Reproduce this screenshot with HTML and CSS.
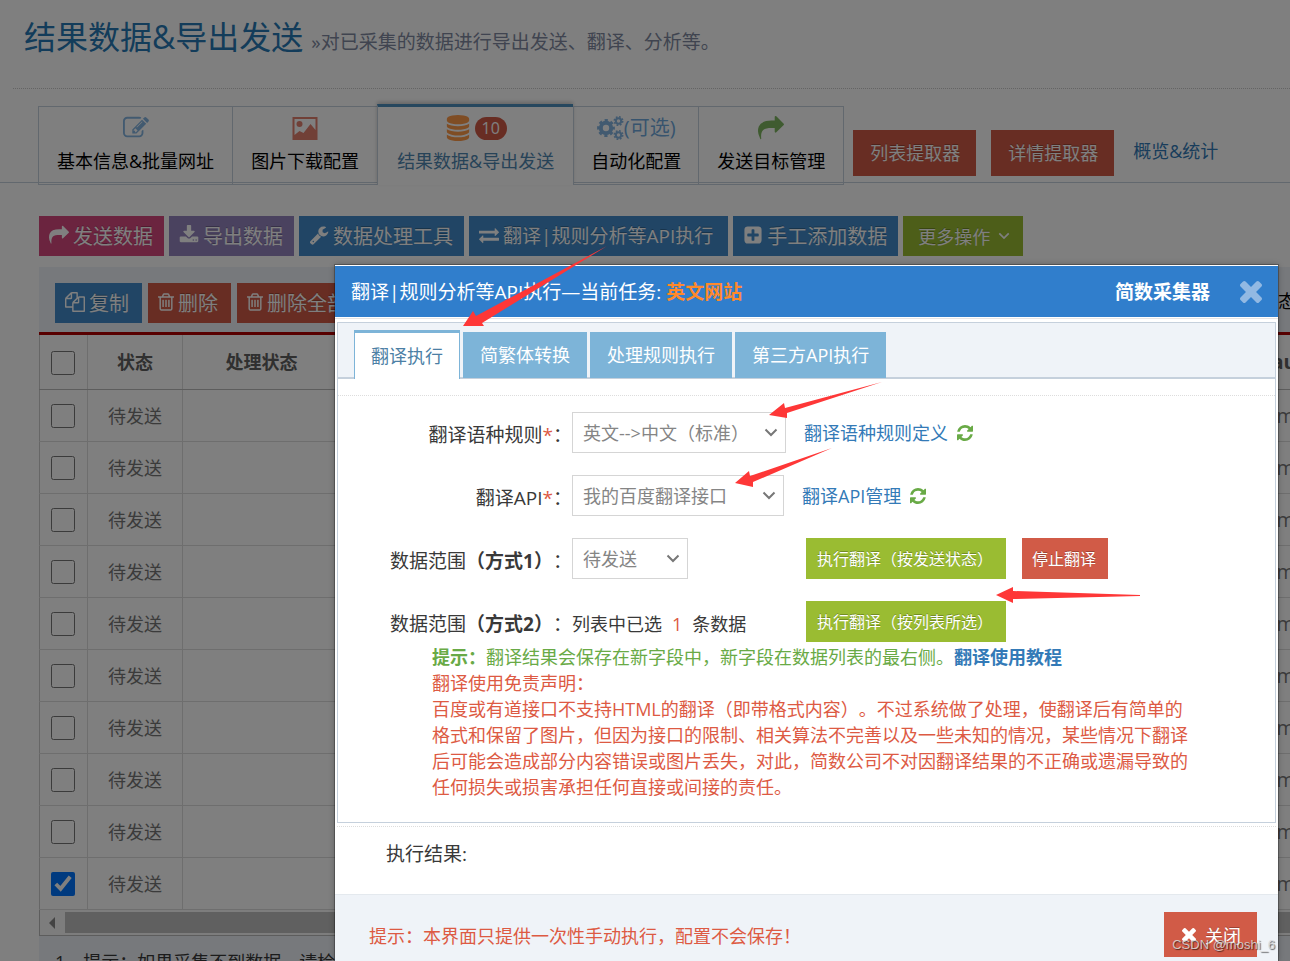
FILE: index.html
```
<!DOCTYPE html>
<html lang="zh-CN">
<head>
<meta charset="utf-8">
<title>结果数据&amp;导出发送</title>
<link rel="stylesheet" href="styles.css">
</head>
<body>
<svg class="defs" aria-hidden="true">
  <symbol id="edit" viewBox="0 0 1792 1792"><path d="M888 1184l116-116-152-152-116 116v56h96v96h56zm440-720q-16-16-33 1l-350 350q-17 17-1 33t33-1l350-350q17-17 1-33zm80 594v190q0 119-84.500 203.500t-203.500 84.500h-832q-119 0-203.500-84.500t-84.500-203.500v-832q0-119 84.500-203.500t203.500-84.500h832q63 0 117 25 15 7 18 23 3 17-9 29l-49 49q-14 14-32 8-23-6-45-6h-832q-66 0-113 47t-47 113v832q0 66 47 113t113 47h832q66 0 113-47t47-113v-126q0-13 9-22l64-64q15-15 35-7t20 29zm-96-738l288 288-672 672h-288v-288zm444 132l-92 92-288-288 92-92q28-28 68-28t68 28l152 152q28 28 28 68t-28 68z"/></symbol>
  <symbol id="picture" viewBox="0 0 25 23"><path fill-rule="evenodd" d="M0 0h25v23H0zM2 2v16l5-4 4 2 7-9 5 6V2z"/><circle cx="7" cy="7" r="3"/></symbol>
  <symbol id="database" viewBox="0 0 1792 1792"><path d="M896 768q237 0 443-43t325-127v170q0 69-103 128t-280 93.500-385 34.500-385-34.500-280-93.500-103-128v-170q119 84 325 127t443 43zm0 768q237 0 443-43t325-127v170q0 69-103 128t-280 93.500-385 34.500-385-34.500-280-93.500-103-128v-170q119 84 325 127t443 43zm0-384q237 0 443-43t325-127v170q0 69-103 128t-280 93.500-385 34.500-385-34.500-280-93.500-103-128v-170q119 84 325 127t443 43zm0-1152q208 0 385 34.500t280 93.500 103 128v128q0 69-103 128t-280 93.500-385 34.500-385-34.500-280-93.500-103-128v-128q0-69 103-128t280-93.500 385-34.500z"/></symbol>
  <symbol id="cogs" viewBox="0 0 27 24"><g fill="none" stroke="currentColor"><circle cx="9" cy="12" r="5.200" stroke-width="4"/><circle cx="9" cy="12" r="7.600" stroke-width="2.600" stroke-dasharray="3.200 2.769" stroke-dashoffset="1.600"/><circle cx="21.500" cy="5" r="2.700" stroke-width="2"/><circle cx="21.500" cy="5" r="4.200" stroke-width="1.600" stroke-dasharray="1.800 1.499"/><circle cx="21.500" cy="19" r="2.700" stroke-width="2"/><circle cx="21.500" cy="19" r="4.200" stroke-width="1.600" stroke-dasharray="1.800 1.499"/></g></symbol>
  <symbol id="share" viewBox="0 0 1792 1792"><path d="M1792 640q0 26-19 45l-512 512q-19 19-45 19t-45-19-19-45v-256h-224q-98 0-175.500 6t-154 21.500-133 42.500-105.500 69.500-80 101-48.500 138.500-17.500 181q0 55 5 123 0 6 2.500 23.500t2.500 26.500q0 15-8.500 25t-23.500 10q-16 0-28-17-7-9-13-22t-13.500-30-10.500-24q-127-285-127-451 0-199 53-333 162-403 875-403h224v-256q0-26 19-45t45-19 45 19l512 512q19 19 19 45z"/></symbol>
  <symbol id="download" viewBox="0 0 1792 1792"><path d="M1344 1344q0-26-19-45t-45-19-45 19-19 45 19 45 45 19 45-19 19-45zm256 0q0-26-19-45t-45-19-45 19-19 45 19 45 45 19 45-19 19-45zm128-224v320q0 40-28 68t-68 28h-1472q-40 0-68-28t-28-68v-320q0-40 28-68t68-28h465l135 136q58 56 136 56t136-56l136-136h464q40 0 68 28t28 68zm-325-569q17 41-14 70l-448 448q-18 19-45 19t-45-19l-448-448q-31-29-14-70 17-39 59-39h256v-448q0-26 19-45t45-19h256q26 0 45 19t19 45v448h256q42 0 59 39z"/></symbol>
  <symbol id="wrench" viewBox="0 0 1792 1792"><path d="M448 1472q0-26-19-45t-45-19-45 19-19 45 19 45 45 19 45-19 19-45zm644-420l-682 682q-37 37-90 37-52 0-91-37l-106-108q-38-36-38-90 0-53 38-91l681-681q39 98 114.500 173.500t173.500 114.500zm634-435q0 39-23 106-47 134-164.500 217.500t-258.500 83.500q-185 0-316.500-131.500t-131.500-316.500 131.500-316.500 316.500-131.500q58 0 121.500 16.500t107.500 46.500q16 11 16 28t-16 28l-293 169v224l193 107q5-3 79-48.500t135.500-81 70.500-35.500q15 0 23.500 10t8.500 25z"/></symbol>
  <symbol id="exchange" viewBox="0 0 1792 1792"><path d="M1792 1184v192q0 13-9.500 22.500t-22.500 9.500h-1376v192q0 13-9.500 22.500t-22.500 9.500q-12 0-24-10l-319-320q-9-9-9-22 0-14 9-23l320-320q9-9 23-9 13 0 22.500 9.500t9.500 22.500v192h1376q13 0 22.500 9.500t9.500 22.500zm0-544q0 14-9 23l-320 320q-9 9-23 9-13 0-22.500-9.500t-9.500-22.500v-192h-1376q-13 0-22.500-9.500t-9.500-22.500v-192q0-13 9.500-22.500t22.500-9.500h1376v-192q0-14 9-23t23-9q12 0 24 10l319 319q9 9 9 23z"/></symbol>
  <symbol id="plus" viewBox="0 0 1792 1792"><path d="M1408 960v-128q0-26-19-45t-45-19h-320v-320q0-26-19-45t-45-19h-128q-26 0-45 19t-19 45v320h-320q-26 0-45 19t-19 45v128q0 26 19 45t45 19h320v320q0 26 19 45t45 19h128q26 0 45-19t19-45v-320h320q26 0 45-19t19-45zm256-544v960q0 119-84.500 203.500t-203.500 84.500h-960q-119 0-203.500-84.500t-84.500-203.500v-960q0-119 84.500-203.500t203.500-84.500h960q119 0 203.500 84.500t84.500 203.500z"/></symbol>
  <symbol id="copy" viewBox="0 0 1792 1792"><path d="M1696 384q40 0 68 28t28 68v1216q0 40-28 68t-68 28h-960q-40 0-68-28t-28-68v-288h-544q-40 0-68-28t-28-68v-672q0-40 20-88t48-76l408-408q28-28 76-48t88-20h416q40 0 68 28t28 68v328q68-40 128-40h416zm-544 213l-299 299h299v-299zm-640-384l-299 299h299v-299zm196 647l316-316v-416h-384v416q0 40-28 68t-68 28h-416v640h512v-256q0-40 20-88t48-76zm956 804v-1152h-384v416q0 40-28 68t-68 28h-416v640h896z"/></symbol>
  <symbol id="trash" viewBox="192 128 1408 1536"><path d="M704 736v576q0 14-9 23t-23 9h-64q-14 0-23-9t-9-23v-576q0-14 9-23t23-9h64q14 0 23 9t9 23zm256 0v576q0 14-9 23t-23 9h-64q-14 0-23-9t-9-23v-576q0-14 9-23t23-9h64q14 0 23 9t9 23zm256 0v576q0 14-9 23t-23 9h-64q-14 0-23-9t-9-23v-576q0-14 9-23t23-9h64q14 0 23 9t9 23zm128 724v-948h-896v948q0 22 7 40.500t14.500 27 10.500 8.500h832q3 0 10.500-8.500t14.500-27 7-40.500zm-672-1076h448l-48-117q-7-9-17-11h-317q-10 2-17 11zm928 32v64q0 14-9 23t-23 9h-96v948q0 83-47 143.500t-113 60.500h-832q-66 0-113-58.500t-47-141.500v-952h-96q-14 0-23-9t-9-23v-64q0-14 9-23t23-9h309l70-167q15-37 54-63t79-26h320q40 0 79 26t54 63l70 167h309q14 0 23 9t9 23z"/></symbol>
  <symbol id="refresh" viewBox="128 128 1536 1536"><path d="M1639 1056q0 5-1 7-64 268-268 434.500t-478 166.500q-146 0-282.500-55t-243.500-157l-129 129q-19 19-45 19t-45-19-19-45v-448q0-26 19-45t45-19h448q26 0 45 19t19 45-19 45l-137 137q71 66 161 102t187 36q134 0 250-65t186-179q11-17 53-117 8-23 30-23h192q13 0 22.500 9.500t9.500 22.500zm25-800v448q0 26-19 45t-45 19h-448q-26 0-45-19t-19-45 19-45l138-138q-148-137-349-137-134 0-250 65t-186 179q-11 17-53 117-8 23-30 23h-199q-13 0-22.500-9.500t-9.500-22.500v-7q65-268 270-434.500t480-166.500q146 0 284 55.500t245 156.500l130-129q19-19 45-19t45 19 19 45z"/></symbol>
  <symbol id="times" viewBox="302 366 1188 1188"><path d="M1490 1322q0 40-28 68l-136 136q-28 28-68 28t-68-28l-294-294-294 294q-28 28-68 28t-68-28l-136-136q-28-28-28-68t28-68l294-294-294-294q-28-28-28-68t28-68l136-136q28-28 68-28t68 28l294 294 294-294q28-28 68-28t68 28l136 136q28 28 28 68t-28 68l-294 294 294 294q28 28 28 68z"/></symbol>
  <symbol id="chevron" viewBox="0 0 14 9"><path d="M1.500 1.500l5.500 5.500 5.500-5.500" fill="none" stroke="currentColor" stroke-width="2"/></symbol>
</svg>

<div class="page">
  <header class="page-header">
    <h1>结果数据&amp;导出发送</h1>
    <small>»对已采集的数据进行导出发送、翻译、分析等。</small>
  </header>

  <nav class="main-tabs">
    <a class="main-tab" href="#"><span class="tab-icon blue"><svg class="i26"><use href="#edit"/></svg></span>基本信息&amp;批量网址</a>
    <a class="main-tab" href="#"><span class="tab-icon red"><svg class="pic"><use href="#picture"/></svg></span>图片下载配置</a>
    <a class="main-tab current" href="#"><span class="tab-icon orange"><svg class="i26"><use href="#database"/></svg><b class="badge">10</b></span>结果数据&amp;导出发送</a>
    <a class="main-tab" href="#"><span class="tab-icon blue"><svg class="cogs"><use href="#cogs"/></svg>(可选)</span>自动化配置</a>
    <a class="main-tab" href="#"><span class="tab-icon green"><svg class="i26"><use href="#share"/></svg></span>发送目标管理</a>
    <button class="extractor" type="button">列表提取器</button>
    <button class="extractor" type="button">详情提取器</button>
    <a class="stats" href="#">概览&amp;统计</a>
  </nav>

  <div class="toolbar">
    <button class="btn pink" type="button"><svg class="i20"><use href="#share"/></svg>发送数据</button>
    <button class="btn purple" type="button"><svg class="i20"><use href="#download"/></svg>导出数据</button>
    <button class="btn primary" type="button"><svg class="i20"><use href="#wrench"/></svg>数据处理工具</button>
    <button class="btn primary compact" type="button"><svg class="i20"><use href="#exchange"/></svg>翻译|规则分析等API执行</button>
    <button class="btn primary" type="button"><svg class="i20"><use href="#plus"/></svg>手工添加数据</button>
    <button class="btn lime" type="button">更多操作<svg class="caret"><use href="#chevron"/></svg></button>
  </div>

  <section class="data-panel">
    <div class="data-tools">
      <button class="btn primary" type="button"><svg class="i20"><use href="#copy"/></svg>复制</button>
      <button class="btn danger" type="button"><svg class="bin"><use href="#trash"/></svg>删除</button>
      <button class="btn danger" type="button"><svg class="bin"><use href="#trash"/></svg>删除全部</button>
      <span class="filter">态</span>
    </div>
    <table class="data-table">
      <colgroup><col class="c-check"><col class="c-state"><col class="c-process"><col><col class="c-last"></colgroup>
      <thead><tr><th><input type="checkbox" aria-label="全选"></th><th>状态</th><th>处理状态</th><th></th><th class="last">au</th></tr></thead>
      <tbody>
        <tr><td><input type="checkbox" aria-label="第1行"></td><td>待发送</td><td></td><td></td><td class="last">im</td></tr>
        <tr><td><input type="checkbox" aria-label="第2行"></td><td>待发送</td><td></td><td></td><td class="last">im</td></tr>
        <tr><td><input type="checkbox" aria-label="第3行"></td><td>待发送</td><td></td><td></td><td class="last">im</td></tr>
        <tr><td><input type="checkbox" aria-label="第4行"></td><td>待发送</td><td></td><td></td><td class="last">im</td></tr>
        <tr><td><input type="checkbox" aria-label="第5行"></td><td>待发送</td><td></td><td></td><td class="last">im</td></tr>
        <tr><td><input type="checkbox" aria-label="第6行"></td><td>待发送</td><td></td><td></td><td class="last">im</td></tr>
        <tr><td><input type="checkbox" aria-label="第7行"></td><td>待发送</td><td></td><td></td><td class="last">im</td></tr>
        <tr><td><input type="checkbox" aria-label="第8行"></td><td>待发送</td><td></td><td></td><td class="last">im</td></tr>
        <tr><td><input type="checkbox" aria-label="第9行"></td><td>待发送</td><td></td><td></td><td class="last">im</td></tr>
        <tr><td><input type="checkbox" aria-label="第10行" checked></td><td>待发送</td><td></td><td></td><td class="last">im</td></tr>
      </tbody>
    </table>
    <div class="scrollbar"><span class="scroll-left"></span><span class="thumb"></span></div>
    <p class="note">1、提示：如果采集不到数据，请检查</p>
  </section>
</div>

<div class="backdrop"></div>

<div class="modal" role="dialog" aria-labelledby="dialog-title">
  <div class="modal-header">
    <h2 id="dialog-title">翻译|规则分析等API执行—当前任务: <b>英文网站</b></h2>
    <strong>简数采集器</strong>
    <button class="close" type="button" aria-label="关闭窗口"><svg class="i20"><use href="#times"/></svg></button>
  </div>
  <div class="modal-body">
    <div class="panel">
      <div class="tabs" role="tablist">
        <button class="tab selected" type="button" role="tab">翻译执行</button>
        <button class="tab" type="button" role="tab">简繁体转换</button>
        <button class="tab" type="button" role="tab">处理规则执行</button>
        <button class="tab" type="button" role="tab">第三方API执行</button>
      </div>
      <form class="form">
        <div class="row">
          <label for="rule">翻译语种规则<i>*</i>：</label>
          <span class="select w-rule"><select id="rule"><option>英文--&gt;中文（标准）</option></select><svg><use href="#chevron"/></svg></span>
          <a href="#">翻译语种规则定义</a><svg class="reload"><use href="#refresh"/></svg>
        </div>
        <div class="row">
          <label for="api">翻译API<i>*</i>：</label>
          <span class="select w-api"><select id="api"><option>我的百度翻译接口</option></select><svg><use href="#chevron"/></svg></span>
          <a href="#">翻译API管理</a><svg class="reload"><use href="#refresh"/></svg>
        </div>
        <div class="row">
          <label for="range">数据范围<b>（方式1）</b>：</label>
          <div class="field"><span class="select w-range"><select id="range"><option>待发送</option></select><svg><use href="#chevron"/></svg></span></div>
          <button class="action lime" type="button">执行翻译（按发送状态）</button>
          <button class="action danger" type="button">停止翻译</button>
        </div>
        <div class="row">
          <span class="label">数据范围<b>（方式2）</b>：</span>
          <div class="field">列表中已选<em>1</em>条数据</div>
          <button class="action lime" type="button">执行翻译（按列表所选）</button>
        </div>
        <div class="tips">
          <p class="hint"><b>提示：</b>翻译结果会保存在新字段中，新字段在数据列表的最右侧。<a href="#">翻译使用教程</a></p>
          <p>翻译使用免责声明：</p>
          <p>百度或有道接口不支持HTML的翻译（即带格式内容）。不过系统做了处理，使翻译后有简单的<br>格式和保留了图片，但因为接口的限制、相关算法不完善以及一些未知的情况，某些情况下翻译<br>后可能会造成部分内容错误或图片丢失，对此，简数公司不对因翻译结果的不正确或遗漏导致的<br>任何损失或损害承担任何直接或间接的责任。</p>
        </div>
      </form>
    </div>
    <div class="result">执行结果:</div>
  </div>
  <div class="modal-footer">
    <span>提示：本界面只提供一次性手动执行，配置不会保存！</span>
    <button class="dismiss" type="button"><svg><use href="#times"/></svg>关闭</button>
  </div>
</div>

<svg class="arrows" viewBox="0 0 1290 961" aria-hidden="true">
  <path d="M463 326l10-15 3 5 131-70-125 77 2 3z"/>
  <path d="M769 415l15-12 1 5 97-26-95 31 0 5z"/>
  <path d="M735 483l14-12 1 5 82-28-79 34 0 5z"/>
  <path d="M996 595l17-8v4l127 4v1l-127 3v4z"/>
</svg>
<span class="watermark">CSDN @moshi_6</span>
</body>
</html>
```
FILE: styles.css
```
* { box-sizing: border-box; }
html, body { height: 100%; }
body {
  margin: 0;
  overflow: hidden;
  position: relative;
  background: #fff;
  color: #393939;
  font-family: "Open Sans", "Noto Sans CJK SC", sans-serif;
  font-size: 18px;
  line-height: 26px;
  text-spacing-trim: space-all;
}
h1, h2, p { margin: 0; font-weight: 400; }
a { color: #337ab7; text-decoration: none; }
button, select { font-family: inherit; border: 0; border-radius: 0; margin: 0; white-space: nowrap; }
svg { fill: currentColor; flex: none; }
.defs { position: absolute; width: 0; height: 0; }
.i20 { width: 20px; height: 20px; }
.i26 { width: 26px; height: 26px; }

.page { height: 100%; overflow: hidden; }
.page-header {
  display: flex;
  align-items: baseline;
  gap: 8px;
  height: 89px;
  margin-left: 13px;
  padding: 13px 0 0 11px;
  border-bottom: 1px dotted #c8c8c8;
  white-space: nowrap;
}
.page-header h1 { color: #2679b5; font-size: 32px; line-height: 48px; }
.page-header small { color: #8089a0; font-size: 19px; }

.main-tabs {
  display: flex;
  align-items: flex-end;
  height: 79px;
  margin-top: 15px;
  padding-left: 38px;
  border-bottom: 1px solid #c5d0dc;
  white-space: nowrap;
}
.main-tab {
  display: flex;
  flex-direction: column;
  align-items: center;
  height: 79px;
  margin-bottom: -3px;
  padding: 7px 18px 0;
  border: 1px solid #c5d0dc;
  border-right: 0;
  color: #000;
}
.main-tab:nth-child(4) { padding: 7px 17px 0; }
.main-tab:nth-child(5) { border-right: 1px solid #c5d0dc; }
.main-tab.current {
  height: 81px;
  padding: 7px 19px 0;
  border-top: 3px solid #4c8fbd;
  border-bottom: 0;
  background: #fff;
  color: #4f86b0;
  box-shadow: 0 -2px 4px rgba(0, 0, 0, .2);
}
.tab-icon { display: flex; align-items: center; height: 28px; margin-bottom: 6px; font-size: 20px; }
.tab-icon svg { opacity: .85; }
.current .tab-icon { gap: 4px; }
.pic { width: 26px; height: 23px; }
.cogs { width: 27px; height: 24px; }
.blue { color: #6fa8dc; }
.red { color: #dd6a57; }
.orange { color: #ff892a; }
.green { color: #69aa46; }
.badge {
  padding: 0 7px;
  border-radius: 12px;
  background: #d15b47;
  color: #fff;
  font-size: 16px;
  font-weight: 400;
  line-height: 23px;
}
.extractor {
  height: 46px;
  margin: 0 6px 6px 9px;
  padding: 0 16px 2px 17px;
  background: #d15b47;
  color: #fff;
  font-size: 18px;
  text-shadow: 0 -1px 0 rgba(0, 0, 0, .25);
}
.stats { margin: 0 0 18px 13px; }

.toolbar { display: flex; gap: 5px; margin-top: 33px; padding-left: 39px; }
.btn {
  display: flex;
  align-items: center;
  flex: none;
  gap: 4px;
  height: 40px;
  padding: 0 11px 2px 10px;
  color: #fff;
  font-size: 20px;
  text-shadow: 0 -1px 0 rgba(0, 0, 0, .25);
}
.btn.compact { padding-right: 15px; font-size: 19px; }
.toolbar .btn.lime { gap: 8px; padding: 0 13px 0 15px; font-size: 18px; }
.caret { width: 12px; height: 8px; }
.bin { width: 16px; height: 18px; }
.pink { background: #d6487e; }
.purple { background: #9585bf; }
.primary { background: #428bca; }
.danger { background: #d15b47; }
.lime { background: #9abc32; }

.data-panel { margin: 11px 0 0 39px; background: #eff3f8; }
.data-tools { display: flex; gap: 6px; height: 65px; padding: 16px 0 0 16px; overflow: hidden; }
.data-tools .btn { padding-right: 13px; }
.filter { margin-left: auto; padding-top: 5px; color: #000; margin-right: -6px; }
.data-table {
  width: 100%;
  table-layout: fixed;
  border-collapse: collapse;
  border-top: 3px solid #b00000;
  border-left: 1px solid #ccc;
  background: #fff;
  color: #777;
}
.c-check { width: 48px; }
.c-state { width: 95px; }
.c-process { width: 158px; }
.c-last { width: 19px; }
.data-table th, .data-table td {
  height: 52px;
  padding: 0;
  border: 0 solid #ddd;
  border-width: 0 1px 1px 0;
  text-align: center;
  overflow: hidden;
}
.data-table th { height: 56px; border-bottom-color: #bbb; color: #606060; }
.data-table .last { text-align: left; font-size: 20px; border-right: 0; }
.data-table input { display: block; width: 24px; height: 24px; margin: 1px 0 0 11px; }
.scrollbar {
  display: flex;
  align-items: center;
  gap: 10px;
  height: 26px;
  padding-left: 9px;
  border: solid #bbb;
  border-width: 0 0 1px 1px;
  background: #fafafa;
}
.scroll-left { border: 6px solid transparent; border-left: 0; border-right-color: #888; }
.thumb { flex: 1; height: 21px; background: #c1c1c1; }
.note { padding: 13px 16px 0; color: #393939; white-space: nowrap; }

.backdrop { position: absolute; inset: 0; background: rgba(0, 0, 0, .5); }

.modal {
  position: absolute;
  left: 335px;
  right: 12px;
  top: 265px;
  bottom: 0;
  display: flex;
  flex-direction: column;
  background: #fff;
  border-top: 1px solid #fff;
  box-shadow: 0 0 0 1px rgba(0, 0, 0, .25), 0 0 6px rgba(0, 0, 0, .3);
}
.modal-header {
  display: flex;
  align-items: center;
  height: 51px;
  padding: 0 16px;
  background: #307ecc;
  color: #fff;
  white-space: nowrap;
}
.modal-header h2 { flex: 1; font-size: 19px; }
.modal-header h2 b { color: #ff892a; }
.modal-header strong { font-size: 19px; }
.close { display: flex; margin-left: 30px; padding: 0; background: none; color: #92b9e3; }
.close svg { width: 22px; height: 22px; }
.modal-body { margin-top: 1px; padding: 3px 2px 0; border-top: 1px solid #e5e5e5; }
.panel { height: 501px; border: 1px solid #c5d0dc; }
.tabs {
  display: flex;
  align-items: flex-end;
  gap: 3px;
  height: 56px;
  padding-left: 16px;
  background: #eff3f8;
  border-bottom: 2px solid #c5d0dc;
}
.tab {
  height: 46px;
  margin-bottom: -1px;
  padding: 0 17px 2px;
  background: #7db4d8;
  color: #fff;
  font-size: 18px;
}
.tab.selected {
  height: 49px;
  margin-bottom: -2px;
  padding: 0 16px 3px;
  border: solid #7db4d8;
  border-width: 3px 1px 0;
  background: #fff;
  color: #4c7fa5;
}
.form { margin-top: 16px; padding-top: 16px; border-top: 1px dotted #ddd; }
.row { display: flex; align-items: center; height: 41px; margin-bottom: 22px; white-space: nowrap; }
.row label, .row .label { width: 234px; padding-top: 5px; text-align: right; font-size: 19px; }
.row i { color: #dd5a43; font-style: normal; }
.field { width: 234px; padding-top: 5px; }
.field:has(select) { padding-top: 0; }
.field em { margin: 0 10px; color: #dd5a43; font-style: normal; }
.select { position: relative; display: block; height: 41px; }
.select select {
  width: 100%;
  height: 100%;
  padding: 0 10px;
  appearance: none;
  border: 1px solid #d5d5d5;
  background: #fff;
  color: #858585;
  font-size: 18px;
}
.select svg { position: absolute; right: 8px; top: 16px; width: 14px; height: 9px; color: #777; pointer-events: none; }
.w-rule { width: 214px; }
.w-api { width: 212px; }
.w-range { width: 116px; }
.row a { margin-left: 18px; }
.reload { width: 16px; height: 16px; margin-left: 9px; color: #69aa46; }
.action {
  height: 41px;
  margin-right: 16px;
  padding: 0 13px 2px 11px;
  color: #fff;
  font-size: 16px;
  text-shadow: 0 -1px 0 rgba(0, 0, 0, .25);
}
.action.danger { padding: 0 12px 2px 10px; }
.tips { margin-top: -20px; padding-left: 94px; color: #dd5a43; white-space: nowrap; }
.tips .hint { color: #69aa46; }
.hint a { font-weight: 700; }
.result { margin-top: 3px; padding: 14px 0 0 49px; height: 68px; border-top: 1px dotted #ddd; font-size: 19px; }
.modal-footer {
  display: flex;
  flex: 1;
  justify-content: space-between;
  align-items: flex-start;
  padding: 17px 21px 0 34px;
  border-top: 1px solid #e4e9ee;
  background: #eff3f8;
  color: #dd5a43;
}
.modal-footer span { padding-top: 11px; }
.dismiss {
  display: flex;
  align-items: center;
  gap: 9px;
  height: 45px;
  padding: 0 16px 0 18px;
  background: #d15b47;
  color: #fff;
  font-size: 18px;
  text-shadow: 0 -1px 0 rgba(0, 0, 0, .25);
}
.dismiss svg { width: 14px; height: 14px; }
.arrows { position: absolute; left: 0; top: 0; width: 1290px; height: 961px; color: #fe3737; pointer-events: none; }
.watermark {
  position: absolute;
  right: 15px;
  bottom: 7px;
  color: rgba(220, 220, 220, .85);
  font: 13px/18px "Liberation Sans", Arial, sans-serif;
  text-shadow: 1px 1px 1px rgba(0, 0, 0, .6);
}
```
